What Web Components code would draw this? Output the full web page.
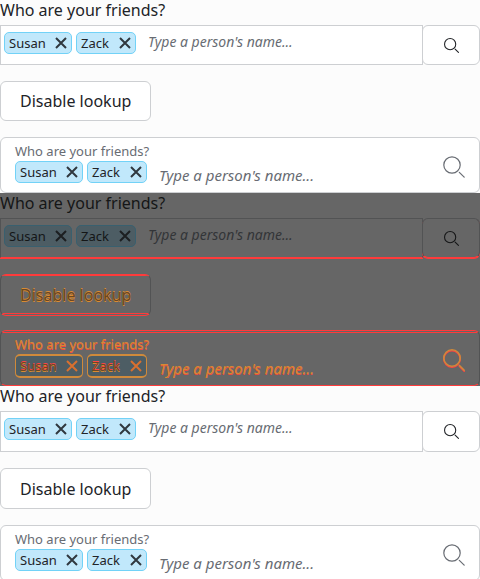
<!DOCTYPE html>
<html lang="en">
<head>
<meta charset="utf-8">
<title>Lookup</title>
<style>
html,body{margin:0;background:#fcfcfc}
body{font-family:"Noto Sans","Open Sans",sans-serif;font-size:16px;line-height:20px;color:#212327}
</style>
</head>
<body>
<lookup-gallery></lookup-gallery>
<script>
const define = (name, html) => {
  const t = document.createElement('template');
  t.innerHTML = html;
  customElements.define(name, class extends HTMLElement {
    constructor() {
      super();
      this.attachShadow({mode: 'open'}).append(t.content.cloneNode(true));
    }
  });
};

define('search-icon', `<style>
:host{display:block;width:22px;height:22px}
:host([small]){width:15px;height:15px}
svg{display:block;width:100%;height:100%;fill:none;stroke:currentColor;stroke-width:var(--stroke,1.2);stroke-linecap:round;overflow:visible}
:host([small]) svg{stroke-width:1.6}
.echo{stroke:var(--echo,none)}
</style><svg viewBox="0 0 22 22" aria-hidden="true"><g class="echo"><circle cx="9" cy="10" r="8.2"/><path d="M16.3 17.3L21.2 22.2"/></g><circle cx="9" cy="9" r="8.2"/><path d="M16.3 16.3L21.2 21.2"/></svg>`);

define('person-token', `<style>
:host{display:flex;box-sizing:border-box;height:22px;align-items:center;justify-content:space-between;flex:none;border:1px solid var(--token-line,#72d2f7);border-radius:5px;background:var(--token-bg,#c1e8fb);padding:0 4px;font-size:13px;line-height:20px;color:var(--token-ink,#212327)}
button{display:block;border:0;padding:0;background:none;width:13px;height:12px;color:var(--cross,#30383f)}
svg{display:block;width:13px;height:12px;stroke:currentColor;stroke-width:2;fill:none}
span{text-shadow:var(--ghost,none)}
</style><span><slot></slot></span><button type="button" aria-label="Remove"><svg viewBox="0 0 13 12"><path d="M2 1L12 11M12 1L2 11"/></svg></button>`);

define('token-list', `<style>:host{display:flex;gap:4px;flex:none;align-items:flex-start}
person-token{height:var(--token-height,22px);border-top-width:var(--token-edge,1px);border-bottom-width:var(--token-edge,1px)}
.s{width:68px}.z{width:60px}</style><person-token class="s">Susan</person-token><person-token class="z">Zack</person-token>`);

const INPUT = `input{flex:1;min-width:0;border:0;outline:0;padding:0;background:none;font:inherit;font-style:italic;color:inherit}
input::placeholder{color:var(--hint,#686c73);opacity:1;text-shadow:var(--soft-ghost,none)}`;

define('basic-lookup', `<style>
${INPUT}
:host{display:block}
label{display:block;height:25px;line-height:21px}
.row{display:flex;height:var(--control,40px)}
.field{flex:1;min-width:0;display:flex;align-items:flex-start;gap:12px;box-sizing:border-box;border:1px solid var(--line,#cdcfd2);border-bottom-color:var(--edge,#cdcfd2);box-shadow:0 1px var(--edge2,transparent);background:var(--box,#fff);padding:6px 3px}
.field input{height:20px;font-size:14px}
.search{flex:none;width:58px;box-sizing:border-box;padding:0;border:1px solid var(--line,#cdcfd2);border-bottom-color:var(--edge,#cdcfd2);box-shadow:0 1px var(--edge2,transparent);border-radius:6px;background:var(--box,#fff);color:var(--ink,#212327);display:flex;align-items:center;justify-content:center;margin-left:-1px}
</style><label for="q">Who are your friends?</label>
<div class="row"><div class="field"><token-list></token-list><input id="q" placeholder="Type a person's name..."></div><button class="search" type="button" aria-label="Search"><search-icon small></search-icon></button></div>`);

define('action-button', `<style>
:host{display:flex}
button{box-sizing:border-box;height:var(--control,40px);padding:0 19px;border:1px solid var(--line,#cdcfd2);border-color:var(--edge,#cdcfd2) var(--line,#cdcfd2);border-radius:6px;background:var(--face,#fff);font:inherit;color:var(--changed,#212327);text-shadow:var(--ghost,none)}
</style><button type="button"><slot></slot></button>`);

define('inline-lookup', `<style>
${INPUT}
:host{display:flex;box-sizing:border-box;height:56px;border:1px solid var(--line,#cdcfd2);border-color:var(--edge,#cdcfd2) var(--line,#cdcfd2);border-radius:6px;background:var(--face,#fff);padding:4px 14px;align-items:center}
.main{flex:1;min-width:0}
label{display:block;font-size:13px;line-height:19px;height:19px;color:var(--hint,#686c73);text-shadow:var(--soft-ghost,none)}
.row{display:flex;gap:12px;height:27px}
.row input{height:27px;font-size:15px}
search-icon{color:var(--glyph,#686c73);margin-top:3px}
</style><div class="main"><label for="q">Who are your friends?</label><div class="row"><token-list></token-list><input id="q" placeholder="Type a person's name..."></div></div><search-icon></search-icon>`);

define('lookup-panel', `<style>
:host{display:flex;flex-direction:column;gap:16px;height:193px;overflow:hidden;background:var(--page,#fcfcfc);color:var(--ink,#212327)}
:host([kind=after]){--control:41px}
:host([kind=diff]){--page:#666;--box:#666;--ink:#151617;--line:#525354;--token-bg:#4d5d64;--token-line:#39606f;--token-ink:#141617;--cross:#1c1f21;--hint:#333538;--edge:#ff3b3b;--edge2:#ff3b3b}
basic-lookup,action-button,inline-lookup{flex:none}
:host([kind=diff]) action-button{--control:42px;--changed:#6b4724;--ghost:0 -1px #d98b32,0 1px #d98b32;--face:linear-gradient(#ff3b3b 1px,#666 1px calc(100% - 2px),#ff3b3b calc(100% - 2px) calc(100% - 1px),#666 calc(100% - 1px)) padding-box;margin-bottom:-2px}
:host([kind=diff]) inline-lookup{--ghost:0 -1px #ff4343,0 1px #d98b32;--soft-ghost:0 1px #f04a3c;--hint:#d58a35;--token-ink:#6b4724;--cross:#d9702f;--token-line:#cf8a3b;--token-edge:2px;--token-height:24px;--glyph:#cf8a3b;--echo:#ff4343;--stroke:1.6;--face:linear-gradient(#666 1px,#ff3b3b 1px 2px,#666 2px) padding-box}
</style>
<basic-lookup></basic-lookup><action-button>Disable lookup</action-button><inline-lookup></inline-lookup>`);

define('lookup-gallery', `<style>:host{display:block}</style>
<lookup-panel kind="before"></lookup-panel><lookup-panel kind="diff"></lookup-panel><lookup-panel kind="after"></lookup-panel>`);
</script>
</body>
</html>
